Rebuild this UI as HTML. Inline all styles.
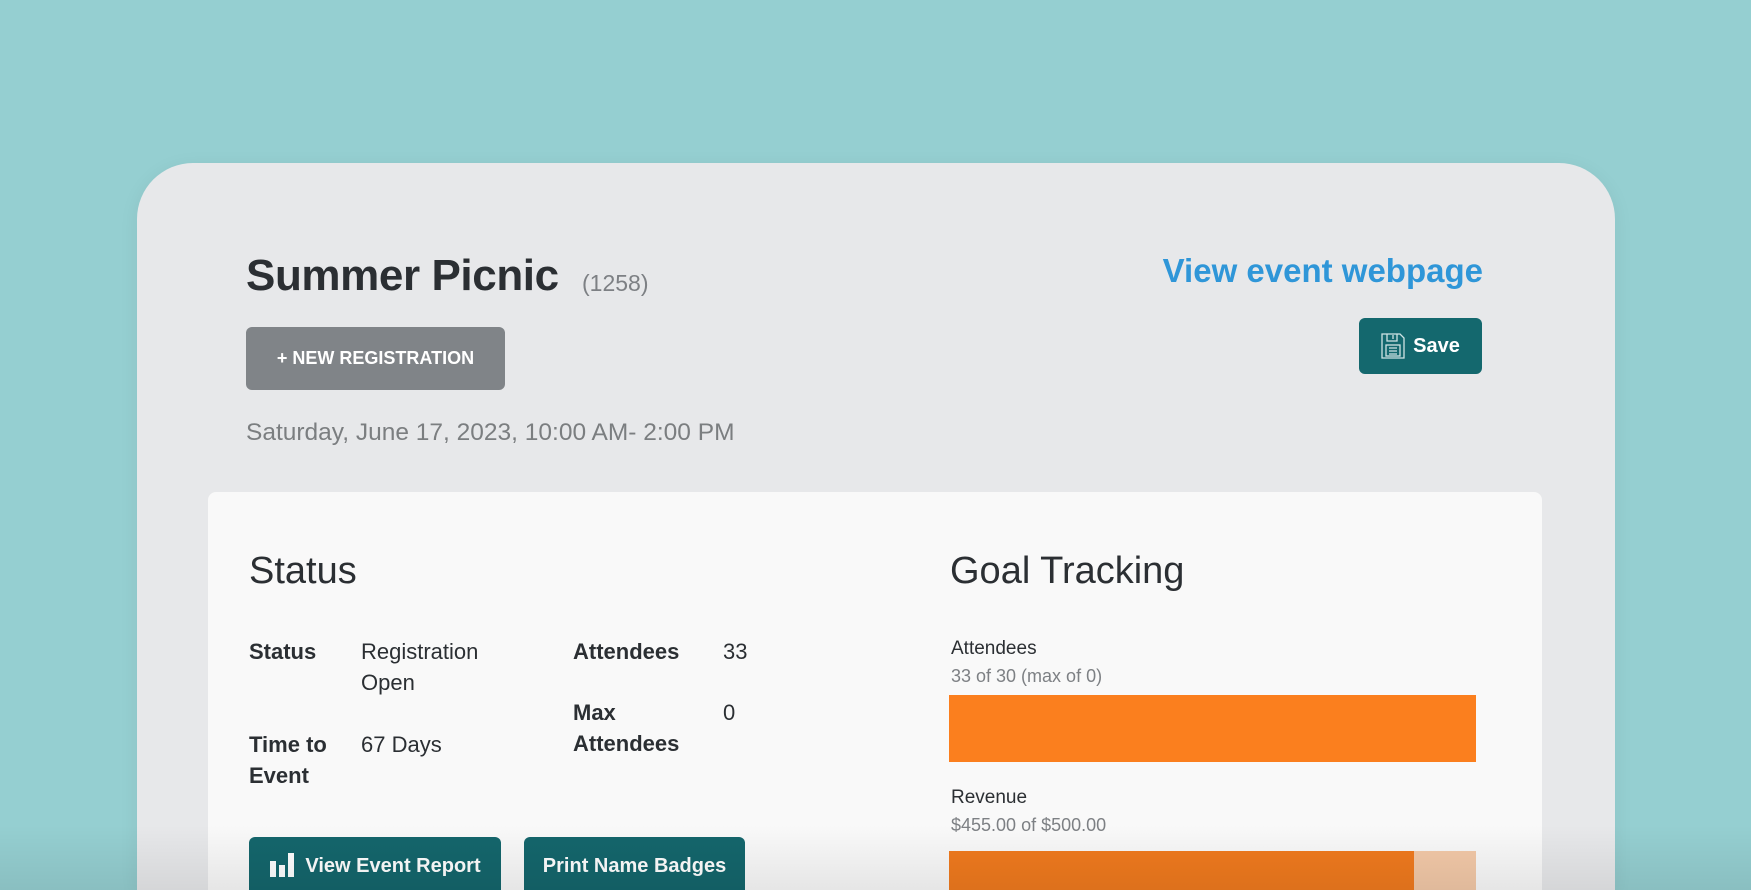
<!DOCTYPE html>
<html><head><meta charset="utf-8"><style>
*{margin:0;padding:0;box-sizing:border-box}
html,body{width:1751px;height:890px;overflow:hidden}
body{background:#95cfd1;font-family:"Liberation Sans",sans-serif}
.wrap{position:relative;width:1751px;height:890px;overflow:hidden}
.card{position:absolute;left:137px;top:163px;width:1478px;height:727px;background:#e7e8ea;border-radius:56px 56px 0 0;box-shadow:0 4px 20px rgba(0,0,0,.06)}
.a{position:absolute;white-space:nowrap}
.title{left:246px;top:251px;font-size:44px;font-weight:bold;color:#2b2f33;letter-spacing:-0.4px}
.id{left:582px;top:270px;font-size:23px;color:#7d8084}
.link{right:268px;top:252px;font-size:33px;font-weight:bold;color:#2f96d8}
.btn{position:absolute;color:#fff;font-weight:bold;display:flex;align-items:center;justify-content:center;border-radius:6px}
.newreg{left:246px;top:327px;width:259px;height:63px;background:#808488;font-size:18px}
.save{left:1359px;top:318px;width:123px;height:56px;background:#14686e;font-size:20px;gap:8px}
.date{left:246px;top:419px;font-size:24.5px;color:#7b7e80}
.panel{position:absolute;left:208px;top:492px;width:1334px;height:398px;background:#f9f9f9;border-radius:8px 8px 0 0}
.h2{font-size:38px;color:#2b2f33}
.t{font-size:22px;color:#2b2f33;line-height:31px}
.tb{font-weight:bold}
.s{font-size:19px;color:#2b2f33}
.g{font-size:18px;color:#7d8084}
.tbtn{top:837px;height:53px;background:#14666c;font-size:20px;gap:8px;border-radius:6px 6px 0 0;align-items:flex-start;padding-top:18px}
.fade{position:absolute;left:0;top:825px;width:1751px;height:65px;background:linear-gradient(rgba(0,0,0,0),rgba(0,0,0,.08))}
</style></head><body><div class="wrap">
<div class="card"></div>
<div class="a title">Summer Picnic</div>
<div class="a id">(1258)</div>
<div class="a link">View event webpage</div>
<div class="btn newreg">+ NEW REGISTRATION</div>
<div class="btn save"><svg width="24" height="26" viewBox="0 0 24 26" fill="none" stroke="#cfe3e4" stroke-width="1.3"><path d="M1 1h18l4 4v20H1z"/><path d="M6 1v7h10V1M12 2v4"/><rect x="5" y="12" width="14" height="11"/><path d="M8 15h8M8 18h8M8 21h8"/></svg>Save</div>
<div class="a date">Saturday, June 17, 2023, 10:00 AM- 2:00 PM</div>
<div class="panel"></div>
<div class="a h2" style="left:249px;top:550px">Status</div>
<div class="a t tb" style="left:249px;top:636px">Status</div>
<div class="a t" style="left:361px;top:636px">Registration<br>Open</div>
<div class="a t tb" style="left:249px;top:729px">Time to<br>Event</div>
<div class="a t" style="left:361px;top:729px">67 Days</div>
<div class="a t tb" style="left:573px;top:636px">Attendees</div>
<div class="a t" style="left:723px;top:636px">33</div>
<div class="a t tb" style="left:573px;top:697px">Max<br>Attendees</div>
<div class="a t" style="left:723px;top:697px">0</div>
<div class="btn tbtn" style="left:249px;width:252px"><svg width="28" height="26" viewBox="0 0 28 26" fill="#fff" style="margin-top:-4px"><rect x="1" y="10" width="6" height="16"/><rect x="10" y="14" width="6" height="12"/><rect x="19" y="2" width="6" height="24"/></svg>View Event Report</div>
<div class="btn tbtn" style="left:524px;width:221px">Print Name Badges</div>
<div class="a h2" style="left:950px;top:550px">Goal Tracking</div>
<div class="a s" style="left:951px;top:638px">Attendees</div>
<div class="a g" style="left:951px;top:666px">33 of 30 (max of 0)</div>
<div class="a" style="left:949px;top:695px;width:527px;height:67px;background:#fb7f1e"></div>
<div class="a s" style="left:951px;top:787px">Revenue</div>
<div class="a g" style="left:951px;top:815px">$455.00 of $500.00</div>
<div class="a" style="left:949px;top:851px;width:527px;height:39px;background:#f3c9a8"></div>
<div class="a" style="left:949px;top:851px;width:465px;height:39px;background:#f07a1e"></div>
<div class="fade"></div>
</div></body></html>
